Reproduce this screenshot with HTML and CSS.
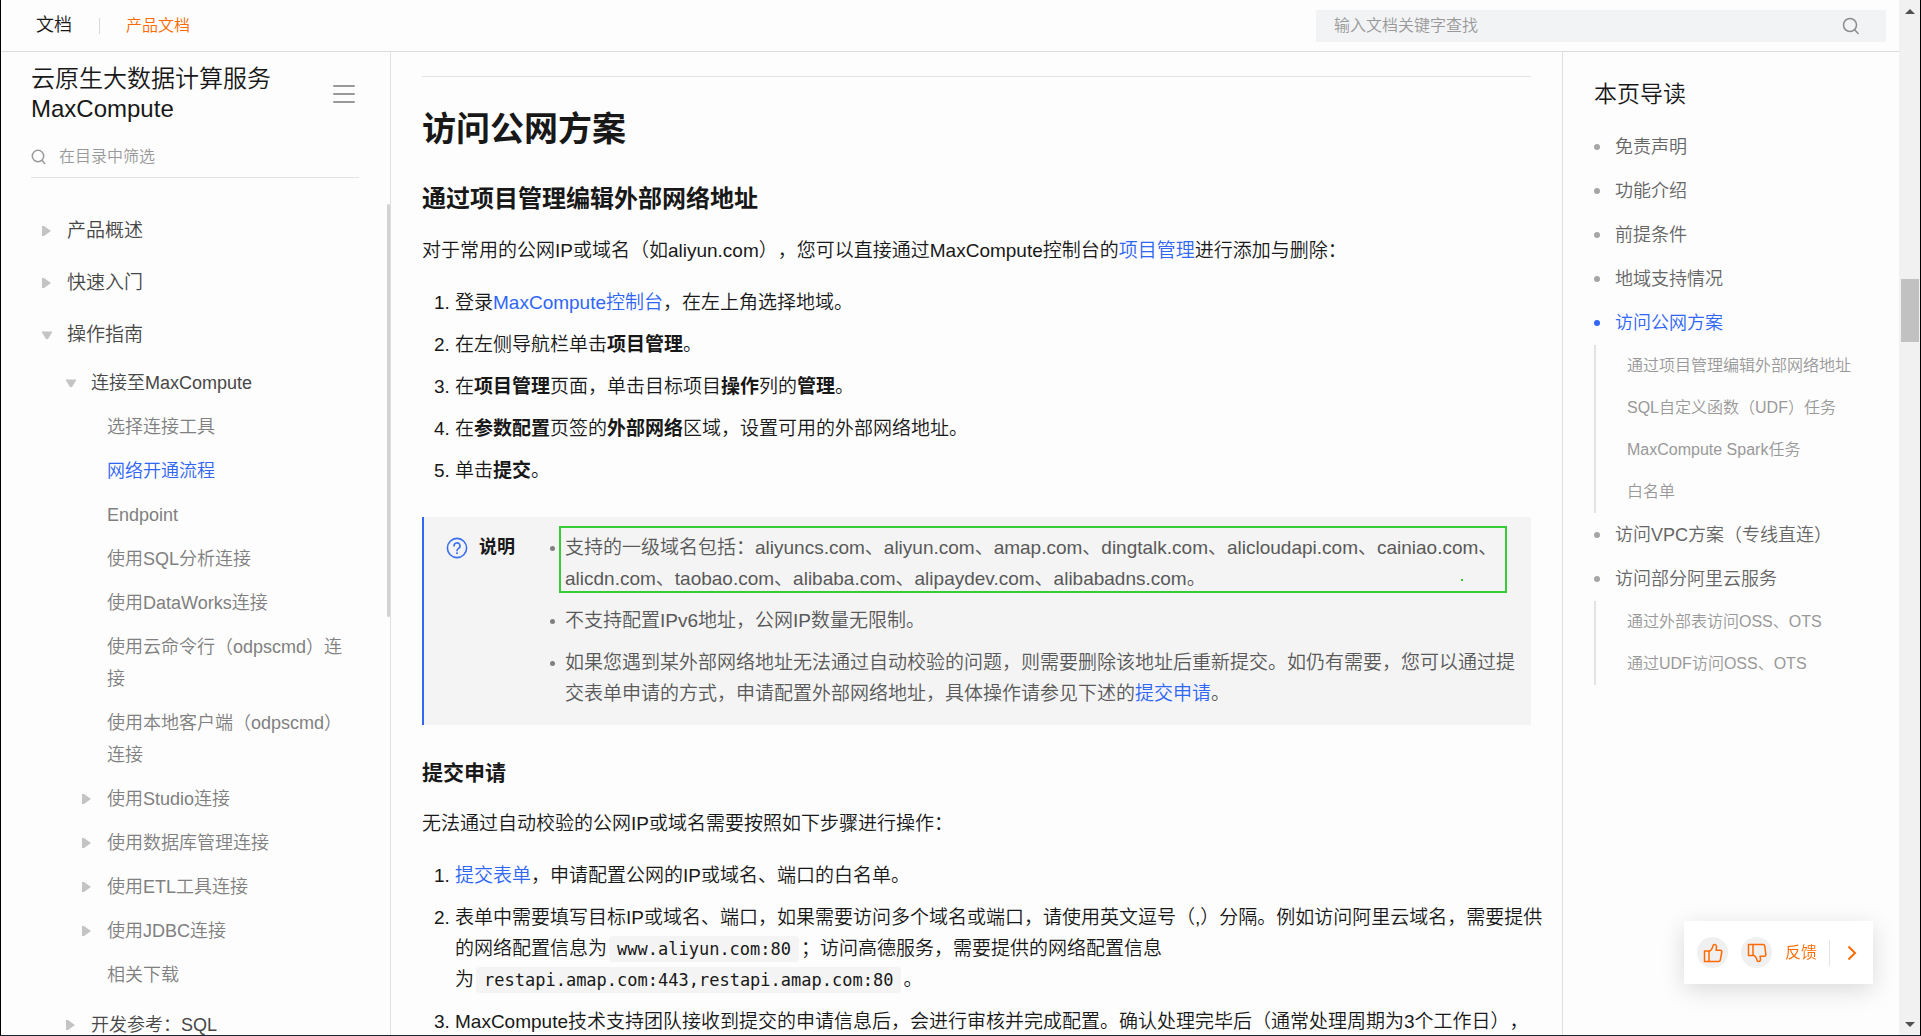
FILE: index.html
```html
<!DOCTYPE html>
<html lang="zh-CN">
<head>
<meta charset="utf-8">
<meta name="viewport" content="width=device-width, initial-scale=1">
<title>云原生大数据计算服务 MaxCompute - 网络开通流程</title>
<link rel="stylesheet" href="styles.css">
</head>
<body>
<div class="window">
  <div class="page">
    <header class="topbar">
      <a class="topbar-home" href="#">文档</a>
      <span class="topbar-divider"></span>
      <a class="topbar-product" href="#">产品文档</a>
      <form class="search">
        <input class="search-input" type="search" aria-label="文档搜索" placeholder="输入文档关键字查找">
        <button class="icon-button" type="button" aria-label="搜索">
          <svg width="18" height="18" viewBox="0 0 18 18" fill="none" stroke="#8c8c8c" stroke-width="1.5"><circle cx="8" cy="8" r="6.5"/><path d="M12.5 12.5L16.5 17"/></svg>
        </button>
      </form>
    </header>

    <div class="columns">
      <nav class="sidebar" aria-label="目录">
        <div class="sidebar-head">
          <h2 class="sidebar-title">云原生大数据计算服务 MaxCompute</h2>
          <button class="icon-button" type="button" aria-label="菜单">
            <svg width="22" height="20" viewBox="0 0 22 20" stroke="#999" stroke-width="2" stroke-linecap="round"><path d="M1 2H21M1 10H21M1 18H21"/></svg>
          </button>
        </div>
        <label class="filter">
          <svg width="15" height="16" viewBox="0 0 15 16" fill="none" stroke="#999" stroke-width="1.5"><circle cx="7" cy="7" r="5.7"/><path d="M10.8 11L14 15"/></svg>
          <input class="filter-input" type="text" aria-label="在目录中筛选" placeholder="在目录中筛选">
        </label>
        <ul class="tree">
          <li><a class="node node-top closed" href="#">产品概述</a></li>
          <li><a class="node node-top closed" href="#">快速入门</a></li>
          <li><a class="node node-top open" href="#">操作指南</a>
            <ul>
              <li><a class="node node-group open" href="#">连接至MaxCompute</a>
                <ul class="leaves">
                  <li><a class="node node-leaf" href="#">选择连接工具</a></li>
                  <li><a class="node node-leaf current" href="#">网络开通流程</a></li>
                  <li><a class="node node-leaf" href="#">Endpoint</a></li>
                  <li><a class="node node-leaf" href="#">使用SQL分析连接</a></li>
                  <li><a class="node node-leaf" href="#">使用DataWorks连接</a></li>
                  <li><a class="node node-leaf" href="#">使用云命令行（odpscmd）连接</a></li>
                  <li><a class="node node-leaf" href="#">使用本地客户端（odpscmd）连接</a></li>
                  <li><a class="node node-leaf closed" href="#">使用Studio连接</a></li>
                  <li><a class="node node-leaf closed" href="#">使用数据库管理连接</a></li>
                  <li><a class="node node-leaf closed" href="#">使用ETL工具连接</a></li>
                  <li><a class="node node-leaf closed" href="#">使用JDBC连接</a></li>
                  <li><a class="node node-leaf" href="#">相关下载</a></li>
                </ul>
              </li>
              <li><a class="node node-group closed" href="#">开发参考：SQL</a></li>
            </ul>
          </li>
        </ul>
        <span class="sidebar-thumb"></span>
      </nav>

      <main class="article">
        <hr class="rule">
        <h1>访问公网方案</h1>
        <h2>通过项目管理编辑外部网络地址</h2>
        <p>对于常用的公网IP或域名（如aliyun.com），您可以直接通过MaxCompute控制台的<a href="#">项目管理</a>进行添加与删除：</p>
        <ol>
          <li>登录<a href="#">MaxCompute控制台</a>，在左上角选择地域。</li>
          <li>在左侧导航栏单击<b>项目管理</b>。</li>
          <li>在<b>项目管理</b>页面，单击目标项目<b>操作</b>列的<b>管理</b>。</li>
          <li>在<b>参数配置</b>页签的<b>外部网络</b>区域，设置可用的外部网络地址。</li>
          <li>单击<b>提交</b>。</li>
        </ol>
        <section class="note">
          <div class="note-label">
            <svg width="22" height="22" viewBox="0 0 22 22" fill="none" stroke="#3a6ff0" stroke-width="1.6"><circle cx="11" cy="11" r="9.6"/><path d="M8 9a3 3 0 1 1 4.6 2.4c-1 .7-1.6 1.2-1.6 2.3" stroke-linecap="round"/><circle cx="11" cy="16.2" r=".6" fill="#3a6ff0" stroke-width="1"/></svg>
            <b>说明</b>
          </div>
          <ul>
            <li class="marked">支持的一级域名包括：aliyuncs.com、aliyun.com、amap.com、dingtalk.com、alicloudapi.com、cainiao.com、alicdn.com、taobao.com、alibaba.com、alipaydev.com、alibabadns.com。</li>
            <li>不支持配置IPv6地址，公网IP数量无限制。</li>
            <li>如果您遇到某外部网络地址无法通过自动校验的问题，则需要删除该地址后重新提交。如仍有需要，您可以通过提交表单申请的方式，申请配置外部网络地址，具体操作请参见下述的<a href="#">提交申请</a>。</li>
          </ul>
        </section>
        <h3>提交申请</h3>
        <p>无法通过自动校验的公网IP或域名需要按照如下步骤进行操作：</p>
        <ol>
          <li><a href="#">提交表单</a>，申请配置公网的IP或域名、端口的白名单。</li>
          <li>表单中需要填写目标IP或域名、端口，如果需要访问多个域名或端口，请使用英文逗号（,）分隔。例如访问阿里云域名，需要提供的网络配置信息<span class="keep">为<code>www.aliyun.com:80</code></span>；访问高德服务，需要提供的网络配置信息<span class="keep">为<code>restapi.amap.com:443,restapi.amap.com:80</code></span>。</li>
          <li>MaxCompute技术支持团队接收到提交的申请信息后，会进行审核并完成配置。确认处理完毕后（通常处理周期为3个工作日），</li>
        </ol>
      </main>

      <aside class="toc" aria-label="本页导读">
        <h2 class="toc-title">本页导读</h2>
        <ul class="toc-list">
          <li><a class="toc-item" href="#">免责声明</a></li>
          <li><a class="toc-item" href="#">功能介绍</a></li>
          <li><a class="toc-item" href="#">前提条件</a></li>
          <li><a class="toc-item" href="#">地域支持情况</a></li>
          <li><a class="toc-item current" href="#">访问公网方案</a>
            <ul class="toc-sub">
              <li><a href="#">通过项目管理编辑外部网络地址</a></li>
              <li><a href="#">SQL自定义函数（UDF）任务</a></li>
              <li><a href="#">MaxCompute Spark任务</a></li>
              <li><a href="#">白名单</a></li>
            </ul>
          </li>
          <li><a class="toc-item" href="#">访问VPC方案（专线直连）</a></li>
          <li><a class="toc-item" href="#">访问部分阿里云服务</a>
            <ul class="toc-sub">
              <li><a href="#">通过外部表访问OSS、OTS</a></li>
              <li><a href="#">通过UDF访问OSS、OTS</a></li>
            </ul>
          </li>
        </ul>
      </aside>
    </div>

    <div class="feedback">
      <button class="vote" type="button" aria-label="有帮助">
        <svg width="20" height="20" viewBox="0 0 20 20" fill="none" stroke="#ff6a00" stroke-width="1.5" stroke-linejoin="round"><path d="M1.5 8H6V18.5H1.5ZM6 8.5C9 7.500 9.500 5 10 2.800C10.300 1 13.200 1 13.500 3.200C13.600 4.700 13.200 6 13 7.200H17.200C18.500 7.200 19 8 18.800 9L17.300 17C17.100 18 16.500 18.500 15.500 18.500H6"/></svg>
      </button>
      <button class="vote" type="button" aria-label="没有帮助">
        <svg width="20" height="20" viewBox="0 0 20 20" fill="none" stroke="#ff6a00" stroke-width="1.5" stroke-linejoin="round"><path d="M1.500 12.500H6V1.500H1.500ZM6 12C9 12.800 9.500 15 10 17.200C10.300 19 13.200 19 13.500 16.800C13.600 15.300 13.200 14.500 13 13.300H17.200C18.500 13.300 19 12.500 18.800 11.500L17.800 3C17.600 2 17 1.500 16 1.500H6"/></svg>
      </button>
      <a class="feedback-link" href="#">反馈</a>
      <button class="feedback-more" type="button" aria-label="收起">
        <svg width="10" height="16" viewBox="0 0 10 16" fill="none" stroke="#ff6a00" stroke-width="2"><path d="M1.500 1.500L8 8L1.500 14.500"/></svg>
      </button>
    </div>
  </div>

  <div class="scrollbar" aria-hidden="true">
    <svg width="10" height="5" viewBox="0 0 10 5"><path d="M0 5L5 0L10 5Z" fill="#505050"/></svg>
    <span class="scrollbar-thumb"></span>
    <svg width="10" height="5" viewBox="0 0 10 5"><path d="M0 0L5 5L10 0Z" fill="#505050"/></svg>
  </div>
</div>
</body>
</html>
```
FILE: styles.css
```css
* { box-sizing: border-box; }

body {
  margin: 0;
  background: #fdfdfd;
  color: #181818;
  font-family: "Liberation Sans", "Noto Sans CJK SC", sans-serif;
  font-size: 19px;
  font-weight: 350;
  line-height: 31px;
  text-spacing-trim: space-all;
}

a { color: #2f66f6; text-decoration: none; }
b { font-weight: 700; }
ul { list-style: none; margin: 0; padding: 0; }
button, input { font: inherit; border: 0; padding: 0; background: none; }
input { outline: none; min-width: 0; appearance: none; }
svg { display: block; flex: none; }

.window {
  display: flex;
  height: 100vh;
  overflow: hidden;
  border: solid #000;
  border-width: 0 1px 1px;
  border-bottom-color: #1c2433;
}

.page {
  flex: 1;
  min-width: 0;
  display: flex;
  flex-direction: column;
}

/* top bar */
.topbar {
  flex: none;
  display: flex;
  align-items: center;
  height: 52px;
  padding: 0 13px 0 35px;
  border-bottom: 1px solid #dcdcdc;
}
.topbar-home { color: #181818; font-size: 18px; }
.topbar-divider { width: 1px; height: 16px; margin: 0 26px 0 27px; background: #d9d9d9; }
.topbar-product { color: #ff6a00; font-size: 16px; }
.search {
  display: flex;
  align-items: center;
  width: 570px;
  height: 32px;
  margin-left: auto;
  padding: 0 26px 0 18px;
  background: #f2f3f5;
}
.search-input { flex: 1; font-size: 16px; line-height: 24px; }
.icon-button { display: flex; cursor: pointer; }
::placeholder { color: #999; opacity: 1; }

.columns {
  flex: 1;
  min-height: 0;
  display: grid;
  grid-template-columns: 390px minmax(0, 1fr) 337px;
  overflow: hidden;
}

/* directory tree */
.sidebar {
  position: relative;
  overflow: hidden;
  padding: 12px 31px 0 30px;
  border-right: 1px solid #e0e0e0;
}
.sidebar-head { display: flex; align-items: center; gap: 48px; padding-right: 4px; }
.sidebar-title { flex: 1; margin: 0; font-size: 24px; font-weight: 350; line-height: 30px; }
.filter {
  display: flex;
  align-items: center;
  gap: 13px;
  height: 42px;
  margin-top: 12px;
  border-bottom: 1px solid #e3e3e3;
}
.filter-input { flex: 1; font-size: 16px; line-height: 24px; }
.tree { margin: 27px 0 0 -30px; padding-right: 10px; }
.node { display: flex; color: #808080; line-height: 32px; }
.node::before { content: ""; flex: none; width: 10px; margin-top: 11px; height: 10px; }
.node.closed::before { background: #c4c4c4; clip-path: polygon(0 0, 20% 0, 90% 50%, 20% 100%, 0 100%); }
.node.open::before { background: #c4c4c4; clip-path: polygon(0 15%, 100% 15%, 100% 25%, 60% 90%, 40% 90%, 0 25%); }
.node-top { gap: 15px; padding: 10px 0 10px 41px; color: #474747; font-size: 19px; }
.node-group { gap: 15px; padding: 6px 0 6px 65px; color: #474747; font-size: 18px; }
.node-leaf { gap: 15px; padding: 6px 0 6px 81px; font-size: 18px; }
.leaves { padding-bottom: 6px; }
.node.current { color: #2f66f6; }
.sidebar-thumb {
  position: absolute;
  top: 152px;
  right: 0;
  width: 3px;
  height: 413px;
  border-radius: 2px;
  background: #d2d2d2;
}

/* article */
.article { overflow: hidden; padding: 0 31px; }
.rule { height: 1px; margin: 24px 0 0; border: 0; background: #e3e3e3; }
.article h1 { margin: 30px 0 0; font-size: 34px; line-height: 44px; }
.article h2 { margin: 32px 0 0; font-size: 24px; line-height: 32px; }
.article h3 { margin: 33px 0 0; font-size: 21px; line-height: 30px; }
.article p { margin: 20px 0 0; }
.article ol { margin: 21px -16px 0 0; padding: 0 0 0 33px; }
.article li + li { margin-top: 11px; }
.keep { white-space: nowrap; }
code {
  margin: 0 2px;
  padding: 3px 8px;
  border-radius: 4px;
  background: #f4f4f4;
  font-family: "DejaVu Sans Mono", monospace;
  font-size: 17px;
  line-height: 20px;
}
.note {
  display: flex;
  margin-top: 31px;
  padding: 15px 14px 16px 22px;
  border-left: 2px solid #2f66f6;
  background: #f4f4f4;
}
.note-label {
  flex: none;
  display: flex;
  align-items: center;
  gap: 11px;
  width: 102px;
  height: 31px;
  font-size: 18px;
}
.note ul { flex: 1; min-width: 0; color: #595959; }
.note li { position: relative; padding-left: 17px; }
.note li::before {
  content: "";
  position: absolute;
  top: 14px;
  left: 2px;
  width: 5px;
  height: 5px;
  border-radius: 50%;
  background: #808080;
}
/* highlight frame drawn over the domain list */
.marked::after {
  content: "";
  position: absolute;
  inset: -6px 10px 1px 11px;
  border: 2px solid #36cc36;
  background: radial-gradient(circle 1px at calc(100% - 43px) 52px, #36cc36 99%, transparent);
}

/* page outline */
.toc { overflow: hidden; padding: 26px 16px 0 31px; border-left: 1px solid #e0e0e0; }
.toc-title { margin: 0; font-size: 23px; font-weight: 350; line-height: 32px; }
.toc-list { margin-top: 15px; }
.toc-item {
  display: flex;
  align-items: center;
  gap: 15px;
  color: #666;
  font-size: 18px;
  line-height: 44px;
}
.toc-item::before { content: ""; width: 6px; height: 6px; border-radius: 50%; background: #a6a6a6; }
.toc-item.current { color: #2f66f6; }
.toc-item.current::before { background: #2f66f6; }
.toc-sub { padding-left: 31px; border-left: 2px solid #e3e3e3; font-size: 16px; line-height: 42px; }
.toc-sub a { color: #999; }

/* feedback card */
.feedback {
  position: fixed;
  right: 48px;
  bottom: 52px;
  display: flex;
  align-items: center;
  width: 189px;
  height: 63px;
  padding-left: 13px;
  background: #fff;
  box-shadow: 0 6px 24px rgba(0, 0, 0, .14);
}
.vote {
  display: flex;
  align-items: center;
  justify-content: center;
  width: 31px;
  height: 31px;
  margin-right: 13px;
  border-radius: 50%;
  background: #f0f0f0;
}
.feedback-link { color: #ff6a00; font-size: 16px; }
.feedback-more { display: flex; align-items: center; height: 26px; margin-left: 12px; padding-left: 17px; border-left: 1px solid #e3e3e3; }

/* window scrollbar */
.scrollbar {
  flex: none;
  display: flex;
  flex-direction: column;
  align-items: center;
  width: 21px;
  padding: 9px 0 8px;
  background: #f1f1f1;
}
.scrollbar-thumb { width: 18px; height: 63px; margin: 265px 0 auto; background: #c1c1c1; }
```
